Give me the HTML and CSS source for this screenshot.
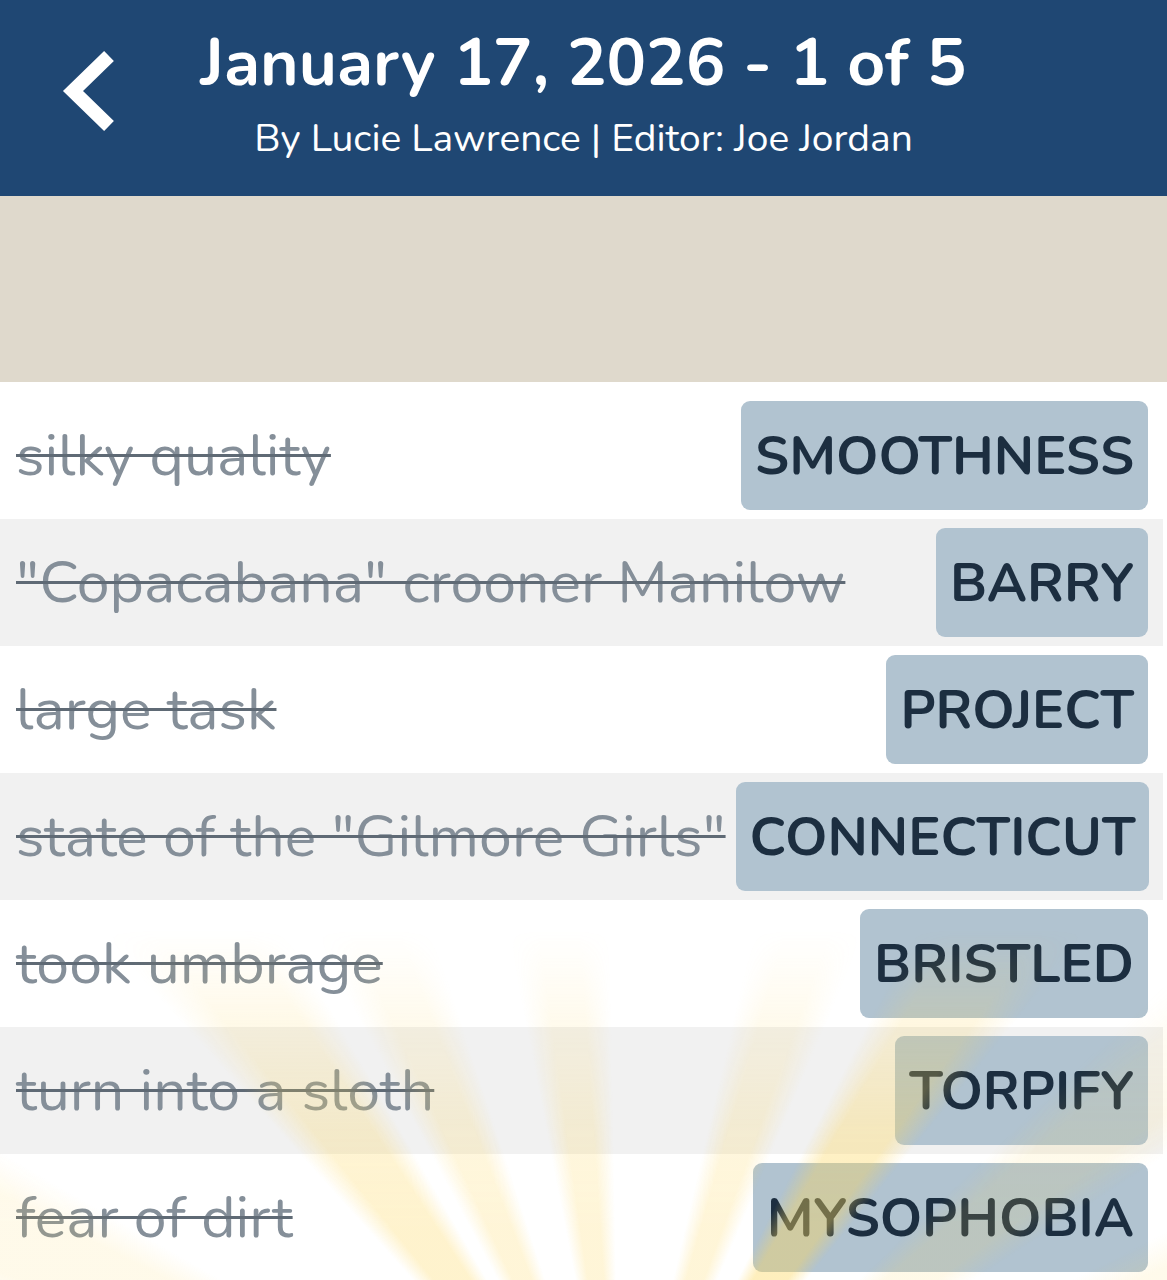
FILE: index.html
```html
<!DOCTYPE html>
<html lang="en">
<head>
<meta charset="utf-8">
<title>January 17, 2026 - 1 of 5</title>
<link rel="stylesheet" href="styles.css">
</head>
<body>
<div class="app">
  <header class="topbar">
    <div class="back">
      <svg width="80" height="100" viewBox="40 40 80 100" aria-hidden="true">
        <polyline points="109,56 73,91 109,126" fill="none" stroke="#ffffff" stroke-width="14" stroke-linecap="butt" stroke-linejoin="miter"/>
      </svg>
    </div>
    <div class="titles">
      <h1 class="title">January 17, 2026 - 1 of 5</h1>
      <p class="byline">By Lucie Lawrence | Editor: Joe Jordan</p>
    </div>
    <div class="spacer"></div>
  </header>
  <div class="band"></div>
  <main class="list">
    <div class="row"><span class="clue">silky quality</span><span class="answer">SMOOTHNESS</span></div>
    <div class="row alt"><span class="clue">"Copacabana" crooner Manilow</span><span class="answer">BARRY</span></div>
    <div class="row"><span class="clue">large task</span><span class="answer">PROJECT</span></div>
    <div class="row alt"><span class="clue">state of the "Gilmore Girls"</span><span class="answer">CONNECTICUT</span></div>
    <div class="row"><span class="clue">took umbrage</span><span class="answer">BRISTLED</span></div>
    <div class="row alt"><span class="clue">turn into a sloth</span><span class="answer">TORPIFY</span></div>
    <div class="row"><span class="clue">fear of dirt</span><span class="answer">MYSOPHOBIA</span></div>
    <div class="rays" aria-hidden="true"></div>
  </main>
</div>
</body>
</html>
```
FILE: styles.css
```css
* { box-sizing: border-box; }
html, body {
  margin: 0;
  padding: 0;
  background: #ffffff;
}
body {
  font-family: "Nunito", "Open Sans", "Noto Sans", sans-serif;
  width: 1167px;
  height: 1280px;
  overflow: hidden;
}
.app {
  width: 1167px;
}
.topbar {
  height: 196px;
  background: #1f4773;
  display: grid;
  grid-template-columns: 1fr auto 1fr;
  align-items: start;
  color: #ffffff;
}
.back {
  padding-left: 40px;
  padding-top: 40px;
}
.back svg {
  display: block;
}
.titles {
  text-align: center;
  padding-top: 23px;
}
.title {
  margin: 0;
  font-size: 66px;
  font-weight: 700;
  line-height: 80px;
}
.byline {
  margin: 0;
  font-size: 39px;
  font-weight: 400;
  line-height: 72px;
}
.band {
  height: 186px;
  background: #dfd9cc;
}
.list {
  position: relative;
  padding-top: 10px;
  padding-right: 4px;
  height: 898px;
  overflow: hidden;
}
.row {
  height: 127px;
  display: flex;
  align-items: center;
  justify-content: space-between;
  gap: 10px;
  padding: 9px 15px 9px 16px;
  background: #ffffff;
}
.row.alt {
  background: #f1f1f1;
}
.clue {
  font-size: 59px;
  color: #858f99;
  white-space: nowrap;
  text-decoration: line-through;
  text-decoration-color: #5f6a75;
  text-decoration-thickness: 3px;
}
.answer {
  flex-shrink: 0;
  height: 109px;
  display: flex;
  align-items: center;
  padding: 0 14px;
  background: #b1c3d0;
  border-radius: 9px;
  color: #1c2e40;
  font-size: 54px;
  font-weight: 700;
  white-space: nowrap;
}
.rays {
  position: absolute;
  left: 0;
  right: 0;
  bottom: 0;
  height: 350px;
  pointer-events: none;
  background: conic-gradient(from -90deg at 620px 580px,
    rgba(253, 214, 90, 0) 0deg 18deg,
    rgba(253, 214, 90, 0.13) 21deg 27deg,
    rgba(253, 214, 90, 0) 30deg 48deg,
    rgba(253, 214, 90, 0.30) 51deg 57deg,
    rgba(253, 214, 90, 0) 60deg 62deg,
    rgba(253, 214, 90, 0.24) 65deg 69deg,
    rgba(253, 214, 90, 0) 72deg 79deg,
    rgba(253, 214, 90, 0.24) 82deg 86deg,
    rgba(253, 214, 90, 0) 89deg 103deg,
    rgba(253, 214, 90, 0.24) 106deg 110deg,
    rgba(253, 214, 90, 0) 113deg 117deg,
    rgba(253, 214, 90, 0.40) 120deg 126deg,
    rgba(253, 214, 90, 0) 129deg 136deg,
    rgba(253, 214, 90, 0.14) 139deg 144deg,
    rgba(253, 214, 90, 0) 147deg 153deg,
    rgba(253, 214, 90, 0.12) 156deg 160deg,
    rgba(253, 214, 90, 0) 163deg 360deg);
  -webkit-mask-image: linear-gradient(to bottom, transparent 0, rgba(0,0,0,0.45) 90px, rgba(0,0,0,0.85) 200px, #000 300px);
  mask-image: linear-gradient(to bottom, transparent 0, rgba(0,0,0,0.45) 90px, rgba(0,0,0,0.85) 200px, #000 300px);
}
```
